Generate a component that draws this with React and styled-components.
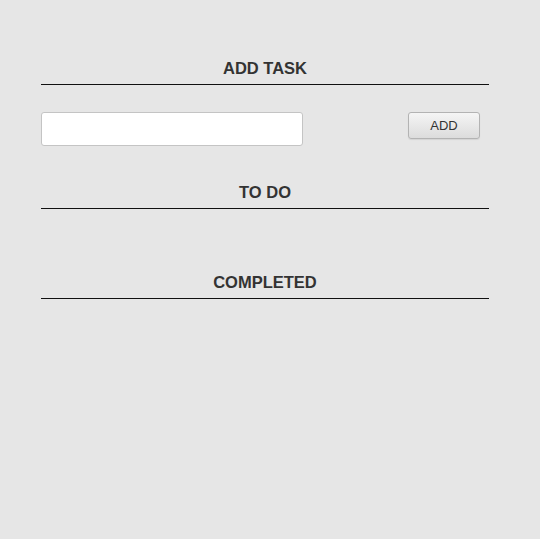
import React from "react";
import styled, { createGlobalStyle } from "styled-components";

const GlobalStyle = createGlobalStyle`
  html, body {
    margin: 0;
    padding: 0;
    background: #e6e6e6;
    font-family: "Liberation Sans", Arial, sans-serif;
  }
`;

const Page = styled.div`
  min-height: 539px;
  background: #e6e6e6;
  padding: 59px 0 0 41px;
  box-sizing: border-box;
`;

const Container = styled.div`
  width: 448px;
  display: flex;
  flex-direction: column;
`;

const Heading = styled.h3`
  margin: ${(p) => p.$top || 0}px 0 0;
  padding: 0 0 6px;
  font-size: 16.5px;
  line-height: 19px;
  font-weight: bold;
  color: #333;
  text-align: center;
  border-bottom: 1px solid #111;
`;

const Row = styled.div`
  margin-top: 27px;
  display: flex;
  align-items: flex-start;
  justify-content: space-between;
  padding-right: 9px;
`;

const Input = styled.input`
  width: 262px;
  height: 34px;
  box-sizing: border-box;
  border: 1px solid #c4c4c4;
  border-radius: 3px;
  background: #fff;
  padding: 0 8px;
  font-family: "Liberation Sans", Arial, sans-serif;
  font-size: 14px;
  outline: none;
`;

const Button = styled.button`
  width: 72px;
  height: 27px;
  box-sizing: border-box;
  border: 1px solid #b3b3b3;
  border-radius: 3px;
  background: linear-gradient(#f5f5f5, #dcdcdc);
  box-shadow: 0 1px 1px rgba(0, 0, 0, 0.08);
  font-family: "Liberation Sans", Arial, sans-serif;
  font-size: 13px;
  color: #333;
  padding: 0;
  cursor: pointer;
`;

const List = styled.ul`
  margin: 0;
  padding: 0;
  list-style: none;
`;

export default function App() {
  return (
    <>
      <GlobalStyle />
      <Page>
        <Container>
          <Heading>ADD TASK</Heading>
          <Row>
            <Input type="text" />
            <Button>ADD</Button>
          </Row>
          <Heading $top={37}>TO DO</Heading>
          <List />
          <Heading $top={64}>COMPLETED</Heading>
          <List />
        </Container>
      </Page>
    </>
  );
}
